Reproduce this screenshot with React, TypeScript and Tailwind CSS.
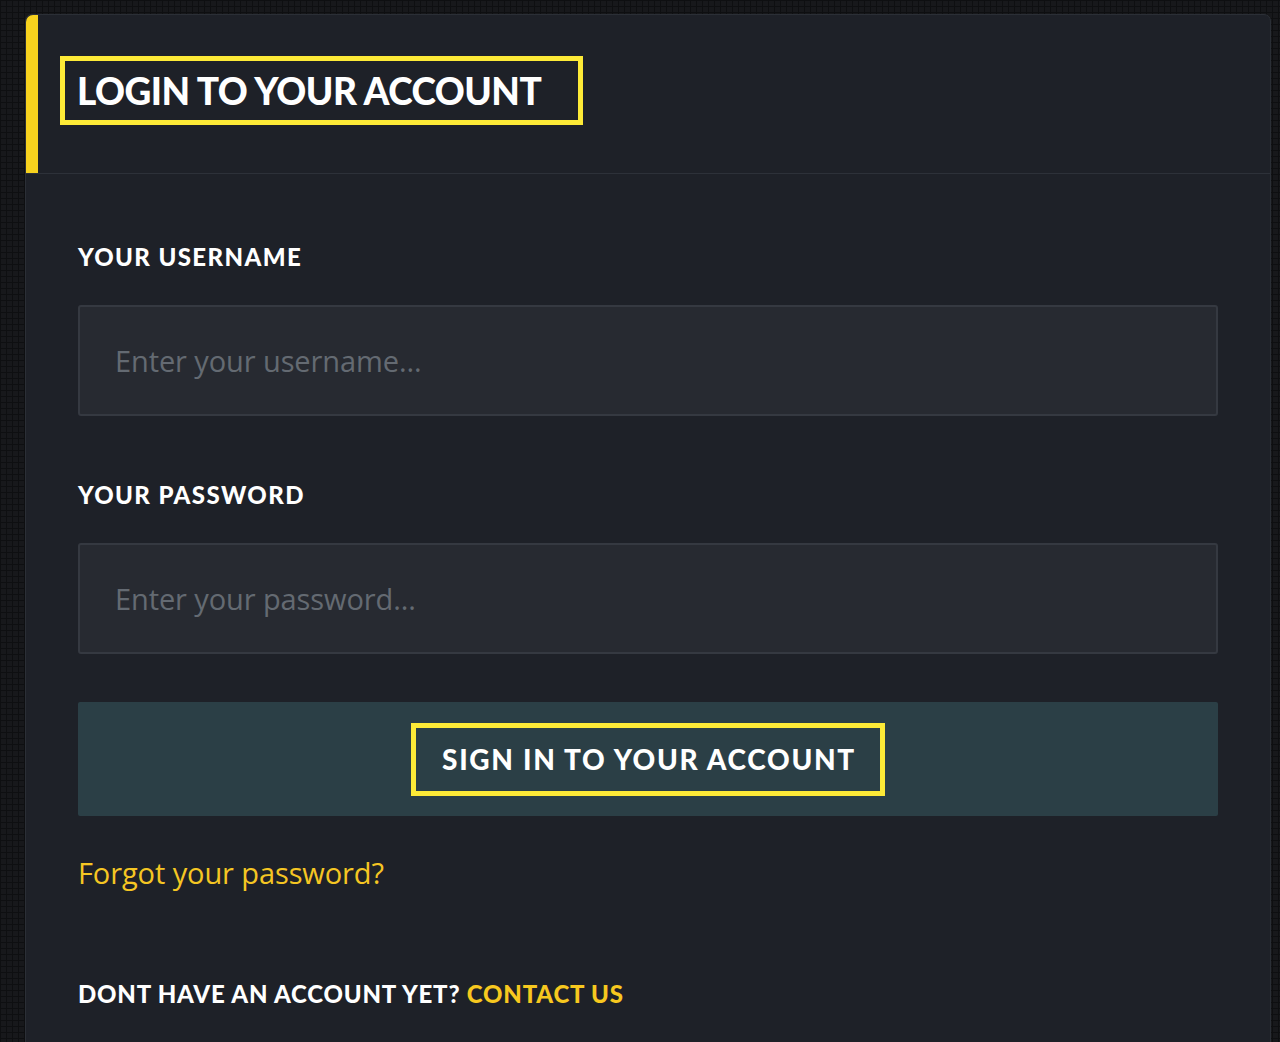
export default function App() {
  return (
    <div className="h-[1042px] overflow-hidden bg-[#17181b] bg-[linear-gradient(#0e0f11_1px,transparent_1px),linear-gradient(90deg,#0e0f11_1px,transparent_1px)] bg-[size:6px_6px] pl-[25px] pr-[9px] pt-[14px]">
      <div className="min-h-[1100px] rounded-t-[7px] border border-[#2b2f36] bg-[#1e2128]">
        {/* Header */}
        <div className="flex h-[159px] border-b border-[#2d3139]">
          <div className="w-[12px] rounded-tl-[7px] bg-[#f7d21e]" />
          <div className="pl-[22px] pt-[41px]">
            <div className="flex h-[69px] w-[523px] items-center border-[5px] border-[#fdea37] pl-[12px]">
              <h1 className="font-['Lato',sans-serif] text-[37px] font-black leading-none tracking-[-0.5px] text-white">
                LOGIN TO YOUR ACCOUNT
              </h1>
            </div>
          </div>
        </div>

        {/* Body */}
        <div className="flex flex-col px-[52px] pt-[71px]">
          <label className="font-['Lato',sans-serif] text-[24px] font-black leading-none tracking-[1.4px] text-white">
            YOUR USERNAME
          </label>
          <input
            className="mt-[36px] h-[111px] rounded-[3px] border-2 border-[#353941] bg-[#272a31] px-[35px] font-['Open_Sans',sans-serif] text-[29px] tracking-[-0.1px] text-white outline-none placeholder:text-[#646a72]"
            placeholder="Enter your username..."
          />

          <label className="mt-[67px] font-['Lato',sans-serif] text-[24px] font-black leading-none tracking-[1.4px] text-white">
            YOUR PASSWORD
          </label>
          <input
            type="password"
            className="mt-[36px] h-[111px] rounded-[3px] border-2 border-[#353941] bg-[#272a31] px-[35px] font-['Open_Sans',sans-serif] text-[29px] tracking-[-0.1px] text-white outline-none placeholder:text-[#646a72]"
            placeholder="Enter your password..."
          />

          <button className="mt-[48px] flex h-[114px] items-center justify-center rounded-[2px] bg-[#2b3f46]">
            <span className="flex h-[73px] w-[474px] items-center justify-center border-[5px] border-[#fdea37] pl-[2px] font-['Lato',sans-serif] text-[28px] font-black tracking-[1.7px] text-white">
              SIGN IN TO YOUR ACCOUNT
            </span>
          </button>

          <a className="mt-[42px] font-['Open_Sans',sans-serif] text-[29px] leading-none tracking-[-0.1px] text-[#f5c623]">
            Forgot your password?
          </a>

          <p className="mt-[95px] font-['Lato',sans-serif] text-[24px] font-black leading-none tracking-[0.8px] text-white">
            DONT HAVE AN ACCOUNT YET? <span className="text-[#f7c81f]">CONTACT US</span>
          </p>
        </div>
      </div>
    </div>
  )
}
